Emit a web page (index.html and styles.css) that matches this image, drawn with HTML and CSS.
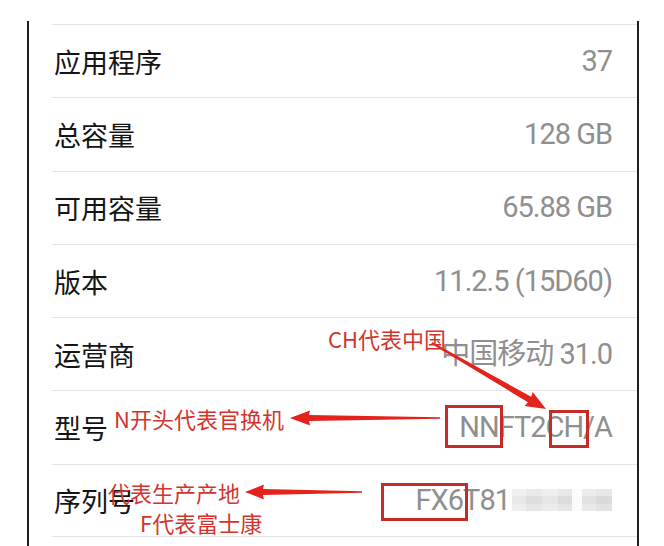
FILE: index.html
```html
<!DOCTYPE html>
<html lang="zh-CN">
<head>
<meta charset="utf-8">
<link rel="stylesheet" href="styles.css">
</head>
<body>
<div class="page">
  <div class="panel">
    <ul class="list">
      <li class="row"><span class="label">应用程序</span><span class="value">37</span></li>
      <li class="row"><span class="label">总容量</span><span class="value">128 GB</span></li>
      <li class="row"><span class="label">可用容量</span><span class="value">65.88 GB</span></li>
      <li class="row"><span class="label">版本</span><span class="value">11.2.5 (15D60)</span></li>
      <li class="row"><span class="label">运营商</span><span class="value">中国移动 31.0</span></li>
      <li class="row"><span class="label">型号</span><span class="value">NNFT2CH/A</span></li>
      <li class="row"><span class="label">序列号</span><span class="value">FX6T81<span class="blur"></span></span></li>
    </ul>
  </div>

  <svg class="marks" width="664" height="546" viewBox="0 0 664 546">
    <g fill="#e5231d">
      <g transform="translate(546 409) rotate(30.07)">
        <polygon points="0,0 -20,-8 -19,-3.2 -132,-0.9 -132,0.9 -19,3.2 -20,8"/>
      </g>
      <polygon points="290,418 310,410.5 309,415 440,417.2 440,418.8 309,421 310,425.5"/>
      <polygon points="245,492 264,484.5 263,489 362,491.2 362,492.8 263,495 264,499.5"/>
    </g>
  </svg>

  <div class="box box-nn"></div>
  <div class="box box-ch"></div>
  <div class="box box-fx"></div>

  <span class="note note-ch">CH代表中国</span>
  <span class="note note-n">N开头代表官换机</span>
  <span class="note note-place">代表生产产地</span>
  <span class="note note-f">F代表富士康</span>
</div>
</body>
</html>
```

FILE: styles.css
```css
html, body {
  margin: 0;
  padding: 0;
  background: #ffffff;
}

.page {
  position: relative;
  width: 664px;
  height: 546px;
  overflow: hidden;
  padding-top: 21px;
  box-sizing: border-box;
}

.panel {
  margin-left: 27px;
  width: 612px;
  height: 525px;
  box-sizing: border-box;
  border-left: 2px solid #1f1f1f;
  border-right: 2px solid #1f1f1f;
  padding-top: 3px;
}

.list {
  list-style: none;
  margin: 0 0 0 23px;
  padding: 0;
}

.row {
  display: flex;
  align-items: center;
  justify-content: space-between;
  height: 73.3px;
  box-sizing: border-box;
  border-top: 1px solid #e4e4e4;
  padding-right: 25px;
  padding-left: 2px;
}

.row:last-child {
  border-bottom: 1px solid #e4e4e4;
}

.label {
  font-family: "Noto Sans CJK SC", "Noto Sans", sans-serif;
  font-size: 27px;
  color: #141414;
  line-height: 1;
}

.value {
  display: flex;
  align-items: center;
  font-family: Roboto, "Noto Sans CJK SC", sans-serif;
  font-size: 29px;
  letter-spacing: -1px;
  color: #8f8f8f;
  line-height: 1;
}

.blur {
  display: inline-block;
  width: 100px;
  height: 22px;
  margin-left: 2px;
  background:
    linear-gradient(180deg, rgba(255,255,255,0.35) 0 30%, rgba(255,255,255,0) 30% 70%, rgba(255,255,255,0.25) 70%),
    linear-gradient(90deg, #e9e9e9 0 14%, #dedede 14% 30%, #e6e6e6 30% 46%, #dcdcdc 46% 60%, #fafafa 60% 70%, #e2e2e2 70% 84%, #dadada 84% 100%);
}

.marks {
  position: absolute;
  left: 0;
  top: 0;
}

.box {
  position: absolute;
  box-sizing: border-box;
  border: 3px solid #c62b26;
}

.box-nn { left: 445px; top: 405px; width: 58px; height: 43px; }
.box-ch { left: 549px; top: 410px; width: 40px; height: 38px; }
.box-fx { left: 381px; top: 483px; width: 87px; height: 38px; }

.note {
  position: absolute;
  font-family: "Noto Sans CJK SC", "Noto Sans", sans-serif;
  font-size: 22px;
  line-height: 22px;
  color: #d4342d;
  white-space: nowrap;
}

.note-ch { left: 328px; top: 327px; }
.note-n { left: 114px; top: 407px; }
.note-place { left: 108px; top: 481px; }
.note-f { left: 140px; top: 511px; }
```
